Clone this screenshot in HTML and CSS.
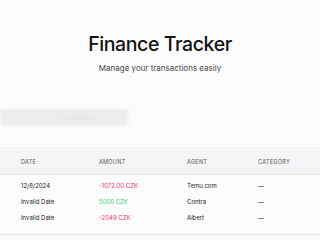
FILE: index.html
```html
<!DOCTYPE html>
<html lang="en">

<head>
    <meta charset="UTF-8">
    <meta name="viewport" content="width=device-width, initial-scale=1.0">
    <title>Finance Tracker</title>
    <link rel="stylesheet" href="styles.css">
</head>

<body>
    <header class="hero">
        <h1 class="hero-title">Finance Tracker</h1>
        <p class="hero-sub">Manage your transactions easily</p>
    </header>

    <div class="search">
        <div class="search-box"><span class="search-hint"></span></div>
    </div>

    <div class="table">
        <div class="row head">
            <span>Date</span>
            <span>Amount</span>
            <span>Agent</span>
            <span>Category</span>
        </div>
        <div class="row">
            <span>12/8/2024</span>
            <span class="neg">-1072.00 CZK</span>
            <span>Temu.com</span>
            <span>—</span>
        </div>
        <div class="row">
            <span>Invalid Date</span>
            <span class="pos">5000 CZK</span>
            <span>Contra</span>
            <span>—</span>
        </div>
        <div class="row">
            <span>Invalid Date</span>
            <span class="neg">-2049 CZK</span>
            <span>Albert</span>
            <span>—</span>
        </div>
    </div>
</body>

</html>
```

FILE: styles.css
```css
body {
    margin: 0;
    background: #fdfcfd;
    font-family: "Inter", "Noto Sans", sans-serif;
    color: #222;
    overflow: hidden;
}

.hero {
    padding-top: 33px;
    text-align: center;
}

.hero-title {
    margin: 0;
    font-size: 19.5px;
    font-weight: 500;
    line-height: 22px;
    color: #111;
    letter-spacing: -0.4px;
}

.hero-sub {
    margin: 8px 0 0;
    font-size: 8px;
    line-height: 10px;
    color: #444;
}

.search {
    margin-top: 36px;
    height: 18px;
}

.search-box {
    width: 128px;
    height: 17px;
    background: #eeecef;
    filter: blur(1.5px);
    display: flex;
    align-items: center;
}

.search-hint {
    margin-left: 63px;
    width: 32px;
    height: 3px;
    background: #e6e4e7;
}

.table {
    margin-top: 21px;
    border-top: 1px solid #efedf0;
    border-bottom: 1px solid #e6e4e7;
    padding-bottom: 9px;
}

.row {
    display: grid;
    grid-template-columns: 78px 88px 71px 1fr;
    padding-left: 21px;
    height: 16px;
    align-items: center;
    font-size: 6px;
    color: #222;
}

.head {
    height: 24px;
    margin-top: 1px;
    margin-bottom: 2px;
    background: #f5f4f6;
    border-bottom: 1px solid #e8e6e9;
    font-size: 5.5px;
    text-transform: uppercase;
    letter-spacing: 0.3px;
    color: #555;
}

.neg {
    color: #e8356e;
}

.pos {
    color: #43cf6c;
}
```
